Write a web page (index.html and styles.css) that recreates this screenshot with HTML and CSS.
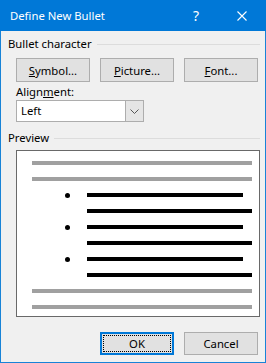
FILE: index.html
```html
<!DOCTYPE html>
<html lang="en">
<head>
  <meta charset="UTF-8" />
  <title>Define New Bullet</title>
  <link rel="stylesheet" href="styles.css">
</head>
<body>

<div class="window">
  <div class="titlebar">
    <span class="title">Define New Bullet</span>
    <span class="help">?</span>
    <svg class="close" width="10" height="10" viewBox="0 0 10 10">
      <path d="M0.5 0.5 L9.5 9.5 M9.5 0.5 L0.5 9.5" stroke="#fff" stroke-width="1.1" />
    </svg>
  </div>

  <div class="content">
    <div class="group-head">
      <span>Bullet character</span>
      <div class="rule"></div>
    </div>

    <div class="btn-row">
      <button class="btn"><u>S</u>ymbol...</button>
      <button class="btn"><u>P</u>icture...</button>
      <button class="btn"><u>F</u>ont...</button>
    </div>

    <div class="field">
      <label>Align<u>m</u>ent:</label>
      <div class="select">
        <span class="value">Left</span>
        <span class="arrow">
          <svg width="9" height="5" viewBox="0 0 9 5">
            <path d="M0.5 0.5 L4.5 4.5 L8.5 0.5" fill="none" stroke="#555" stroke-width="1" />
          </svg>
        </span>
      </div>
    </div>

    <div class="group-head preview-head">
      <span>Preview</span>
      <div class="rule"></div>
    </div>

    <div class="preview">
      <div class="line gray"></div>
      <div class="line gray"></div>
      <div class="bullet-row"><span class="dot"></span><div class="line black short"></div></div>
      <div class="line black indent"></div>
      <div class="bullet-row"><span class="dot"></span><div class="line black short"></div></div>
      <div class="line black indent"></div>
      <div class="bullet-row"><span class="dot"></span><div class="line black short"></div></div>
      <div class="line black indent"></div>
      <div class="line gray"></div>
      <div class="line gray"></div>
    </div>

    <div class="btn-row actions">
      <button class="btn default"><span class="focus">OK</span></button>
      <button class="btn">Cancel</button>
    </div>
  </div>
</div>

</body>
</html>
```

FILE: styles.css
```css
body {
  margin: 0;
  background: #f0f0f0;
  font-family: "Segoe UI", "Noto Sans", sans-serif;
  font-size: 11.3px;
  color: #000;
}
.window {
  width: 266px;
  height: 363px;
  box-sizing: border-box;
  border: 1px solid #1883d7;
  border-top: none;
  background: #f0f0f0;
}
.titlebar {
  height: 31px;
  background: #0078d7;
  color: #fff;
  display: flex;
  align-items: center;
  margin: 0 -1px;
  padding: 0 0 0 10px;
}
.title {
  flex: 1;
  margin-top: -1px;
}
.help {
  font-size: 14px;
  margin-right: 38px;
  margin-top: -1px;
}
.close {
  margin-right: 19px;
}
.content {
  padding: 5px 5px 0 7px;
}
.group-head {
  display: flex;
  align-items: center;
  height: 15px;
  line-height: 15px;
}
.group-head .rule {
  flex: 1;
  height: 1px;
  background: #dcdcdc;
  margin-left: 5px;
  margin-top: 1px;
}
.btn-row {
  display: flex;
  gap: 10px;
  width: 242px;
  margin: 7px 0 0 8px;
}
.btn {
  width: 74px;
  height: 24px;
  padding: 0;
  background: #e1e1e1;
  border: 1px solid #adadad;
  font: inherit;
  color: #000;
}
.field {
  margin: 2px 0 0 8px;
}
.field label {
  display: block;
  height: 15px;
  line-height: 15px;
}
.select {
  margin-top: 1px;
  width: 128px;
  height: 22px;
  box-sizing: border-box;
  border: 1px solid #adadad;
  background: #fff;
  display: flex;
}
.select .value {
  flex: 1;
  padding-left: 4px;
  line-height: 20px;
}
.select .arrow {
  width: 17px;
  border-left: 1px solid #adadad;
  background: #e5e5e5;
  display: flex;
  align-items: center;
  justify-content: center;
}
.preview-head {
  margin-top: 8px;
}
.preview {
  margin: 5px 0 0 8px;
  width: 244px;
  height: 167px;
  box-sizing: border-box;
  border: 1px solid #696969;
  background: #fff;
  padding: 10px 7px 7px 15px;
  display: grid;
  grid-auto-rows: 4px;
  row-gap: 12px;
}
.line {
  height: 4px;
}
.gray {
  background: #a0a0a0;
}
.black {
  background: #000;
}
.indent {
  margin-left: 55px;
}
.bullet-row {
  display: flex;
  align-items: center;
  height: 4px;
}
.dot {
  width: 5px;
  height: 5px;
  border-radius: 50%;
  background: #000;
  margin-left: 33px;
}
.short {
  margin-left: 17px;
  width: 156px;
}
.actions {
  justify-content: flex-end;
  margin-top: 15px;
}
.actions .btn {
  height: 23px;
}
.btn.default {
  border: 2px solid #0078d7;
  padding: 1px;
}
.btn .focus {
  display: flex;
  align-items: center;
  justify-content: center;
  height: 100%;
  box-sizing: border-box;
  border: 1px dotted #000;
}
```
